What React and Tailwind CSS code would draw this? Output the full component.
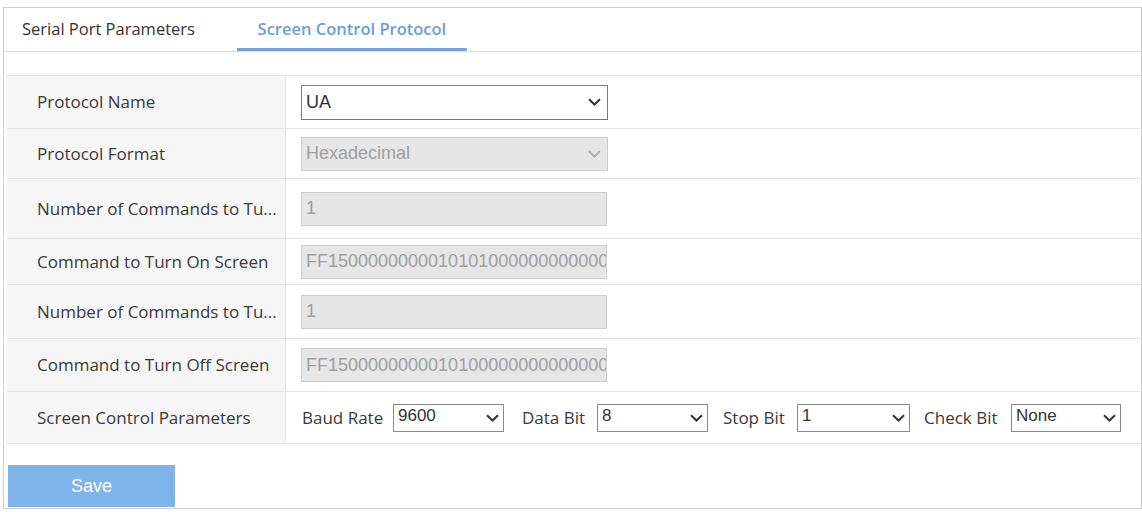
import React from "react";

const labelFont = { fontFamily: '"Open Sans", "Noto Sans", sans-serif' };
const inputFont = { fontFamily: '"Liberation Sans", Arial, sans-serif' };

function Chevron({ color = "#333" }) {
  return (
    <svg width="13" height="8" viewBox="0 0 13 8" className="shrink-0">
      <path d="M1 1.2 L6.5 6.5 L12 1.2" fill="none" stroke={color} strokeWidth="2" />
    </svg>
  );
}

function Row({ h, label, children }) {
  return (
    <div className={`flex border-b border-[#e3e3e3] ${h}`}>
      <div
        className="w-[279px] shrink-0 bg-[#f6f6f6] border-r border-[#e6e6e6] flex items-center pl-[30px] text-[17px] text-[#3a3a3a]"
        style={labelFont}
      >
        {label}
      </div>
      <div className="flex-1 flex items-center pl-[15px] bg-white">{children}</div>
    </div>
  );
}

function DisabledSelect({ text }) {
  return (
    <div
      className="w-[307px] h-[34px] bg-[#e6e6e6] border border-[#cdcdcd] flex items-center pl-[4px] pr-[6px] text-[18px] text-[#a0a0a0]"
      style={inputFont}
    >
      <span className="flex-1">{text}</span>
      <Chevron color="#b0b0b0" />
    </div>
  );
}

function DisabledInput({ value }) {
  return (
    <input
      disabled
      readOnly
      value={value}
      className="w-[306px] h-[34px] bg-[#e6e6e6] border border-[#cdcdcd] pl-[4px] pr-0 text-[18px] text-[#a0a0a0] outline-none"
      style={inputFont}
    />
  );
}

function SmallSelect({ value, w }) {
  return (
    <div
      className={`${w} h-[28px] bg-white border border-[#8a8a8a] flex items-center pl-[4px] pr-[4px] text-[17px] text-[#333]`}
      style={inputFont}
    >
      <span className="flex-1 leading-none -mt-[4px]">{value}</span>
      <Chevron />
    </div>
  );
}

export default function App() {
  return (
    <div className="w-[1142px] h-[512px] bg-white overflow-hidden">
      <div className="ml-[3px] mt-[7px] w-[1139px] h-[502px] border border-[#cfcfcf] flex flex-col">
        {/* Tabs */}
        <div className="h-[44px] shrink-0 flex border-b border-[#dedede]" style={labelFont}>
          <div className="h-full flex items-center px-[18px] text-[16.5px] text-[#333]">
            Serial Port Parameters
          </div>
          <div className="ml-[24px] w-[230px] h-full flex items-center justify-center border-b-[3px] border-[#72a3d9] text-[16.5px] font-semibold text-[#6a9fd8] pt-[3px]">
            Screen Control Protocol
          </div>
        </div>

        <div className="h-[23px] shrink-0" />

        {/* Table */}
        <div className="ml-[3px] mr-[1px] border-t border-[#e3e3e3] flex flex-col">
          <Row h="h-[53px]" label="Protocol Name">
            <div
              className="w-[307px] h-[35px] bg-white border border-[#7a7a7a] flex items-center pl-[4px] pr-[6px] text-[18px] text-[#333]"
              style={inputFont}
            >
              <span className="flex-1">UA</span>
              <Chevron color="#333" />
            </div>
          </Row>
          <Row h="h-[50px]" label="Protocol Format">
            <DisabledSelect text="Hexadecimal" />
          </Row>
          <Row h="h-[60px]" label="Number of Commands to Tu...">
            <DisabledInput value="1" />
          </Row>
          <Row h="h-[46px]" label="Command to Turn On Screen">
            <DisabledInput value="FF150000000001010100000000000000" />
          </Row>
          <Row h="h-[54px]" label="Number of Commands to Tu...">
            <DisabledInput value="1" />
          </Row>
          <Row h="h-[53px]" label="Command to Turn Off Screen">
            <DisabledInput value="FF150000000001010000000000000000" />
          </Row>
          <Row h="h-[52px]" label="Screen Control Parameters">
            <div className="flex items-center pl-[1px] text-[17px] text-[#3a3a3a]" style={labelFont}>
              <span className="w-[91px]">Baud Rate</span>
              <SmallSelect value="9600" w="w-[111px]" />
              <span className="ml-[18px] w-[75px]">Data Bit</span>
              <SmallSelect value="8" w="w-[111px]" />
              <span className="ml-[15px] w-[74px]">Stop Bit</span>
              <SmallSelect value="1" w="w-[113px]" />
              <span className="ml-[14px] w-[87px]">Check Bit</span>
              <SmallSelect value="None" w="w-[110px]" />
            </div>
          </Row>
        </div>

        {/* Save */}
        <div className="mt-[21px] ml-[4px]">
          <button
            className="w-[167px] h-[42px] bg-[#80b3ea] text-white text-[18px] flex items-center justify-center"
            style={inputFont}
          >
            Save
          </button>
        </div>
      </div>
    </div>
  );
}
